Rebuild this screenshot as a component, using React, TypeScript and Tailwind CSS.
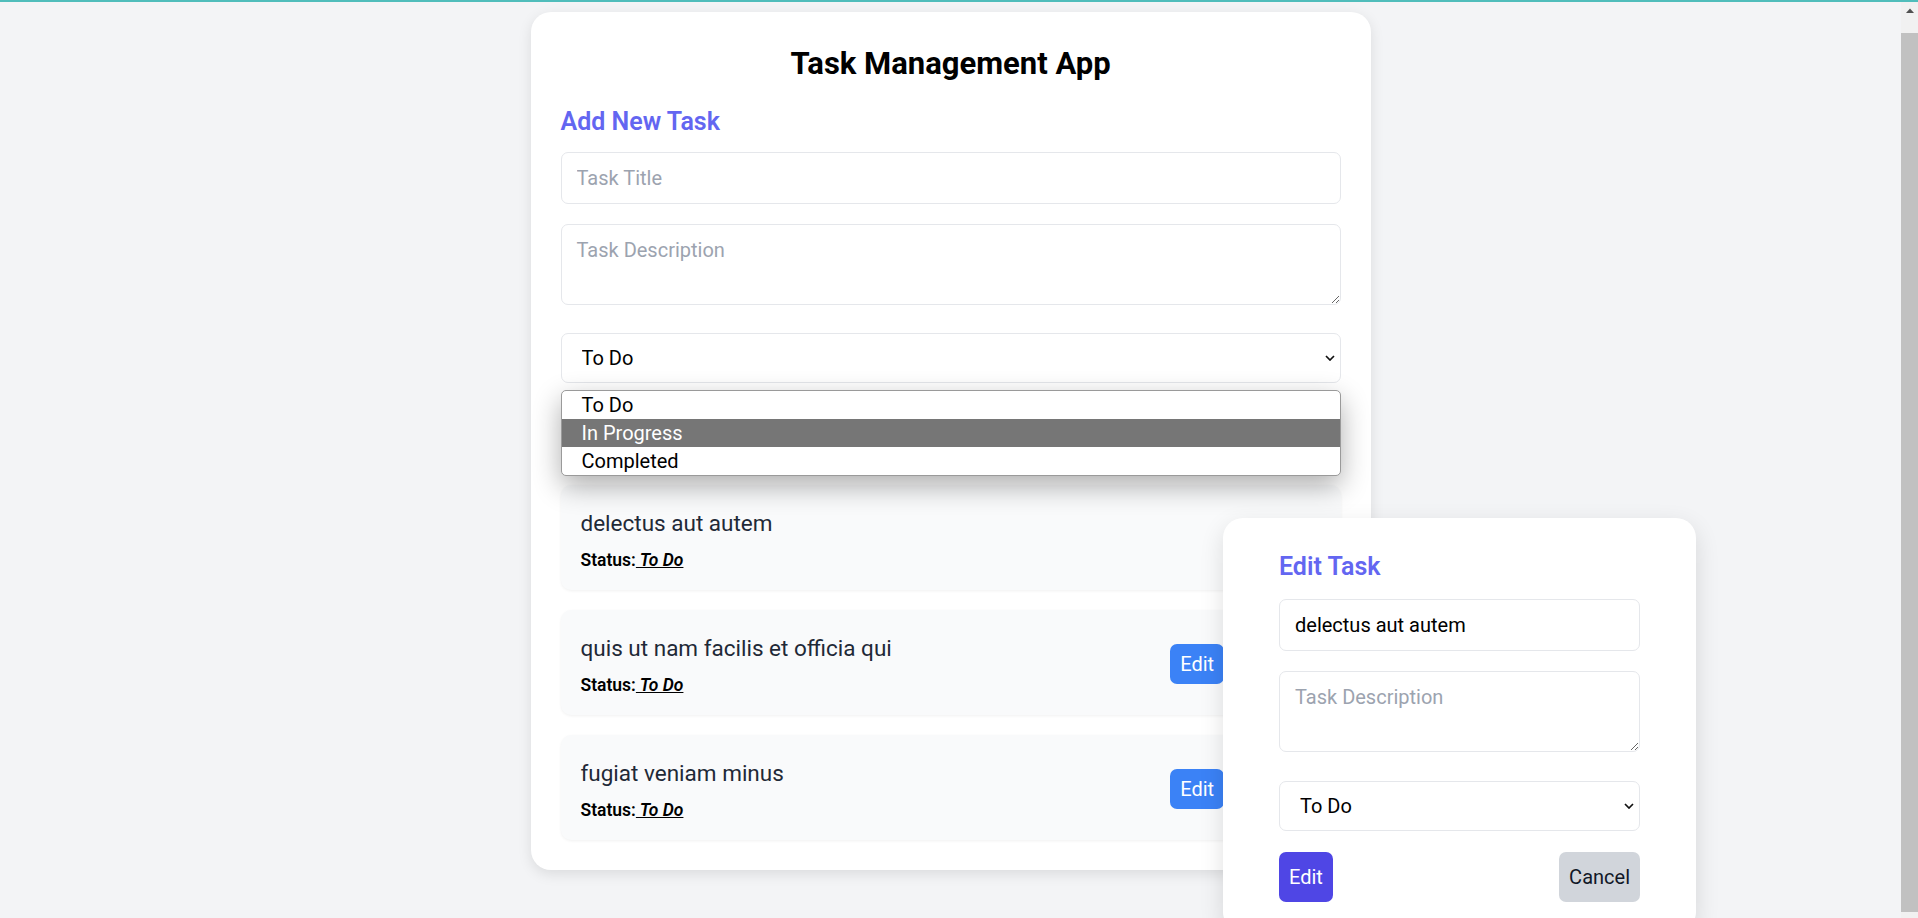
type Task = { id: number; title: string; status: string };

const tasks: Task[] = [
  { id: 1, title: "delectus aut autem", status: "To Do" },
  { id: 2, title: "quis ut nam facilis et officia qui", status: "To Do" },
  { id: 3, title: "fugiat veniam minus", status: "To Do" },
];

const editingId = 1;

function Chevron() {
  return (
    <svg
      width="10"
      height="6"
      viewBox="0 0 10 6"
      className="pointer-events-none absolute right-[6px] top-1/2 -translate-y-1/2"
    >
      <path d="M1 1l4 4 4-4" fill="none" stroke="#111" strokeWidth="1.7" />
    </svg>
  );
}

function StatusSelect() {
  return (
    <>
      <select
        defaultValue="To Do"
        className="block h-[50px] w-full appearance-none rounded-[7px] border border-[#e5e7eb] bg-white pl-[20px] text-[20px] text-black"
      >
        <option>To Do</option>
        <option>In Progress</option>
        <option>Completed</option>
      </select>
      <Chevron />
    </>
  );
}

// the native option list that is open over the form
function OpenOptions() {
  return (
    <div className="absolute left-0 right-0 top-[57px] z-30 overflow-hidden rounded-[5px] border border-[#9a9a9a] bg-white text-[20px] leading-[28px] shadow-[0_10px_28px_rgba(0,0,0,0.32)]">
      <div className="pl-[20px] text-black">To Do</div>
      <div className="bg-[#767676] pl-[20px] text-white">In Progress</div>
      <div className="pl-[20px] text-black">Completed</div>
    </div>
  );
}

function TaskItem({ task }: { task: Task }) {
  return (
    <li className="flex items-center justify-between rounded-[10px] bg-[#f9fafb] px-5 pt-5 pb-[17px] shadow-[0_1px_3px_rgba(0,0,0,0.06)]">
      <div>
        <h3 className="pt-[1px] text-[22.5px] leading-[35px] text-[#1f2937]">{task.title}</h3>
        <p className="mt-[7px] text-[17.5px] leading-[25px] font-semibold text-black">
          Status:<span className="italic underline">{" " + task.status}</span>
        </p>
      </div>
      <div className="flex gap-5">
        {task.id !== editingId && (
          <button className="rounded-[7px] bg-[#3b82f6] px-[10px] py-[5px] text-[20px] leading-[30px] text-white">
            Edit
          </button>
        )}
        <button className="rounded-[7px] bg-[#ef4444] px-[10px] py-[5px] text-[20px] leading-[30px] text-white">
          Delete
        </button>
      </div>
    </li>
  );
}

function EditModal() {
  return (
    <div className="absolute left-[1223px] top-[516px] z-20 w-[473px] rounded-[20px] bg-white px-[56px] pt-[31px] pb-[30px] shadow-[0_8px_24px_rgba(0,0,0,0.12)]">
      <h2 className="mb-[15px] text-[25px] leading-[35px] font-semibold text-[#6366f1]">Edit Task</h2>
      <input
        defaultValue="delectus aut autem"
        className="mb-5 block h-[52px] w-full rounded-[7px] border border-[#e5e7eb] px-[15px] text-[20px] text-black"
      />
      <textarea
        placeholder="Task Description"
        className="mb-[29px] block h-[81px] w-full rounded-[7px] border border-[#e5e7eb] px-[15px] py-[10px] text-[20px] leading-[30px] placeholder:text-[#9ca3af]"
      />
      <div className="relative mb-[21px]">
        <StatusSelect />
      </div>
      <div className="flex justify-between">
        <button className="rounded-[7px] bg-[#4f46e5] px-[10px] py-[10px] text-[20px] leading-[30px] text-white">
          Edit
        </button>
        <button className="rounded-[7px] bg-[#d1d5db] px-[10px] py-[10px] text-[20px] leading-[30px] text-[#111827]">
          Cancel
        </button>
      </div>
    </div>
  );
}

function Scrollbar() {
  return (
    <div className="flex w-[17px] shrink-0 flex-col bg-[#f1f1f1]">
      <div className="flex h-[17px] items-center justify-center">
        <svg width="8" height="5" viewBox="0 0 8 5">
          <path d="M0 5L4 0.5L8 5Z" fill="#505050" />
        </svg>
      </div>
      <div className="mt-[14px] mb-[6px] flex-1 bg-[#c1c1c1]" />
    </div>
  );
}

export default function App() {
  return (
    <div className="flex h-[918px] flex-col overflow-hidden bg-[#f3f4f6] font-[Roboto,sans-serif] text-black">
      <div className="h-[2px] shrink-0 bg-[#50bdbb]" />
      <div className="flex min-h-0 flex-1">
        <main className="relative flex-1">
          <div className="mx-auto mt-[10px] w-[840px] rounded-[20px] bg-white p-[30px] shadow-[0_4px_14px_rgba(0,0,0,0.1)]">
            <h1 className="mb-[18px] pt-[2px] text-center text-[31px] leading-[40px] font-bold">Task Management App</h1>
            <h2 className="mb-[13px] pt-[2px] text-[25px] leading-[35px] font-semibold text-[#6366f1]">Add New Task</h2>
            <input
              placeholder="Task Title"
              className="mb-5 block h-[52px] w-full rounded-[7px] border border-[#e5e7eb] px-[15px] text-[20px] placeholder:text-[#9ca3af]"
            />
            <textarea
              placeholder="Task Description"
              className="mb-7 block h-[81px] w-full rounded-[7px] border border-[#e5e7eb] px-[15px] py-[10px] text-[20px] leading-[30px] placeholder:text-[#9ca3af]"
            />
            <div className="relative mb-5">
              <StatusSelect />
              <OpenOptions />
            </div>
            <button className="block h-[50px] w-full rounded-[7px] bg-[#4f46e5] text-[20px] text-white">
              Add Task
            </button>
            <ul className="mt-8 flex flex-col gap-5">
              {tasks.map((t) => (
                <TaskItem key={t.id} task={t} />
              ))}
            </ul>
          </div>
          <EditModal />
        </main>
        <Scrollbar />
      </div>
    </div>
  );
}
